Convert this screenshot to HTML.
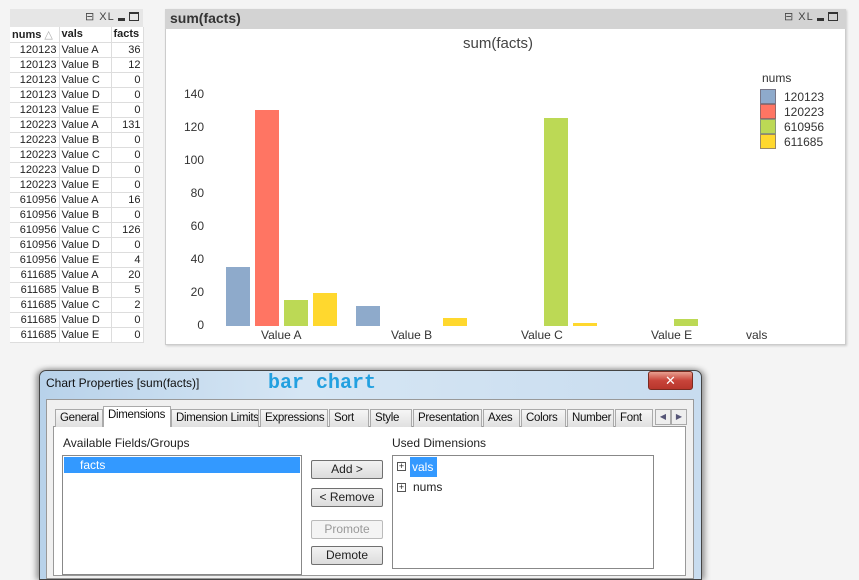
<!DOCTYPE html>
<html><head><meta charset="utf-8"><style>
*{margin:0;padding:0;box-sizing:border-box}
body{width:859px;height:572px;background:#f4f4f4;position:relative;overflow:hidden;font-family:"Liberation Sans","DejaVu Sans",sans-serif;font-size:11px;color:#222}
.a{position:absolute}
table{border-collapse:collapse;position:absolute;left:10px;top:27px;background:#fff}
td{height:15px;border-right:1px solid #ddd;border-bottom:1px solid #ddd;padding:0 2px;font-size:11px;line-height:14px;white-space:nowrap}
td.n{width:49px;text-align:right}
td.v{width:52px}
td.f{width:32px;text-align:right}
th{height:15px;font-weight:bold;text-align:left;padding:0 2px;border-right:1px solid #ddd;border-bottom:1px solid #ddd;font-size:11px}
.bar{position:absolute;width:24px}
.B{background:#8eaacb}.R{background:#ff7563}.G{background:#bcd955}.Y{background:#ffd82e}
.yl{position:absolute;width:40px;text-align:right;font-size:12px;color:#333}
.xl{position:absolute;font-size:12px;color:#333}
.tab{position:absolute;top:409px;height:18px;border:1px solid #aaa;border-bottom:none;background:linear-gradient(#f6f6f6,#e0e0e0);font-size:11.5px;padding:2px 0 0 4px;color:#111;white-space:nowrap;overflow:hidden;letter-spacing:-0.3px}
.btn{position:absolute;left:311px;width:72px;height:19px;border:1px solid #707070;border-radius:2px;background:linear-gradient(#f2f2f2,#dcdcdc);text-align:center;font-size:12px;line-height:17px}
</style></head><body>
<div class="a" style="left:10px;top:9px;width:133px;height:18px;background:#e6e6e6"></div>
<div class="a" style="left:85px;top:10px;font-size:11px;color:#444;letter-spacing:1px">⊟ XL <span style="display:inline-block;width:7px;height:3px;background:#333;vertical-align:-1px"></span> <span style="display:inline-block;width:10px;height:9px;border:1px solid #333;border-top-width:2px;vertical-align:-1px"></span></div>
<table>
<tr><th style="width:49px">nums <span style="color:#aaa;font-weight:normal">△</span></th><th style="width:52px">vals</th><th style="width:32px">facts</th></tr>
<tr><td class="n">120123</td><td class="v">Value A</td><td class="f">36</td></tr>
<tr><td class="n">120123</td><td class="v">Value B</td><td class="f">12</td></tr>
<tr><td class="n">120123</td><td class="v">Value C</td><td class="f">0</td></tr>
<tr><td class="n">120123</td><td class="v">Value D</td><td class="f">0</td></tr>
<tr><td class="n">120123</td><td class="v">Value E</td><td class="f">0</td></tr>
<tr><td class="n">120223</td><td class="v">Value A</td><td class="f">131</td></tr>
<tr><td class="n">120223</td><td class="v">Value B</td><td class="f">0</td></tr>
<tr><td class="n">120223</td><td class="v">Value C</td><td class="f">0</td></tr>
<tr><td class="n">120223</td><td class="v">Value D</td><td class="f">0</td></tr>
<tr><td class="n">120223</td><td class="v">Value E</td><td class="f">0</td></tr>
<tr><td class="n">610956</td><td class="v">Value A</td><td class="f">16</td></tr>
<tr><td class="n">610956</td><td class="v">Value B</td><td class="f">0</td></tr>
<tr><td class="n">610956</td><td class="v">Value C</td><td class="f">126</td></tr>
<tr><td class="n">610956</td><td class="v">Value D</td><td class="f">0</td></tr>
<tr><td class="n">610956</td><td class="v">Value E</td><td class="f">4</td></tr>
<tr><td class="n">611685</td><td class="v">Value A</td><td class="f">20</td></tr>
<tr><td class="n">611685</td><td class="v">Value B</td><td class="f">5</td></tr>
<tr><td class="n">611685</td><td class="v">Value C</td><td class="f">2</td></tr>
<tr><td class="n">611685</td><td class="v">Value D</td><td class="f">0</td></tr>
<tr><td class="n">611685</td><td class="v">Value E</td><td class="f">0</td></tr>
</table>

<div class="a" style="left:165px;top:9px;width:681px;height:336px;background:#fff;border:1px solid #ccc;box-shadow:1px 1px 2px #ccc"></div>
<div class="a" style="left:165px;top:9px;width:681px;height:20px;background:#d3d3d3"></div>
<div class="a" style="left:170px;top:10px;font-size:14px;font-weight:bold;color:#333">sum(facts)</div>
<div class="a" style="left:784px;top:10px;font-size:11px;color:#444;letter-spacing:1px">⊟ XL <span style="display:inline-block;width:7px;height:3px;background:#333;vertical-align:-1px"></span> <span style="display:inline-block;width:10px;height:9px;border:1px solid #333;border-top-width:2px;vertical-align:-1px"></span></div>
<div class="a" style="left:463px;top:35px;font-size:15px;color:#444">sum(facts)</div>
<div class="yl" style="left:164px;top:87px">140</div>
<div class="yl" style="left:164px;top:120px">120</div>
<div class="yl" style="left:164px;top:153px">100</div>
<div class="yl" style="left:164px;top:186px">80</div>
<div class="yl" style="left:164px;top:219px">60</div>
<div class="yl" style="left:164px;top:252px">40</div>
<div class="yl" style="left:164px;top:285px">20</div>
<div class="yl" style="left:164px;top:318px">0</div>
<div class="bar B" style="left:226px;top:267px;height:59px"></div>
<div class="bar R" style="left:255px;top:110px;height:216px"></div>
<div class="bar G" style="left:284px;top:300px;height:26px"></div>
<div class="bar Y" style="left:313px;top:293px;height:33px"></div>
<div class="bar B" style="left:356px;top:306px;height:20px"></div>
<div class="bar Y" style="left:443px;top:318px;height:8px"></div>
<div class="bar G" style="left:544px;top:118px;height:208px"></div>
<div class="bar Y" style="left:573px;top:323px;height:3px"></div>
<div class="bar G" style="left:674px;top:319px;height:7px"></div>
<div class="xl" style="left:261px;top:328px">Value A</div>
<div class="xl" style="left:391px;top:328px">Value B</div>
<div class="xl" style="left:521px;top:328px">Value C</div>
<div class="xl" style="left:651px;top:328px">Value E</div>
<div class="xl" style="left:746px;top:328px">vals</div>
<div class="xl" style="left:762px;top:71px">nums</div>
<div class="a B" style="left:760px;top:89px;width:16px;height:15px;border:1px solid #778"></div>
<div class="a R" style="left:760px;top:104px;width:16px;height:15px;border:1px solid #966"></div>
<div class="a G" style="left:760px;top:119px;width:16px;height:15px;border:1px solid #897"></div>
<div class="a Y" style="left:760px;top:134px;width:16px;height:15px;border:1px solid #986"></div>
<div class="xl" style="left:784px;top:90px;line-height:15px">120123<br>120223<br>610956<br>611685</div>

<div class="a" style="left:39px;top:370px;width:663px;height:210px;border:1px solid #444;border-radius:7px 7px 0 0;background:linear-gradient(90deg,#b8d2ea,#d6e6f4 40%,#c8dcef);box-shadow:-3px 0 6px #999,3px 0 6px #999"></div>
<div class="a" style="left:46px;top:376px;font-size:12px;color:#111">Chart Properties [sum(facts)]</div>
<div class="a" style="left:268px;top:372px;font-family:'Liberation Mono',monospace;font-size:20px;font-weight:bold;color:#22a0e0">bar chart</div>
<div class="a" style="left:648px;top:371px;width:45px;height:19px;border:1px solid #7a2a20;border-radius:3px;background:linear-gradient(#e8a090,#c8443a 50%,#b8362c);color:#fff;font-weight:bold;text-align:center;font-size:13px;line-height:17px">✕</div>
<div class="a" style="left:46px;top:399px;width:648px;height:180px;background:#f0f0f0;border:1px solid #999"></div>
<div class="a" style="left:53px;top:426px;width:633px;height:150px;background:#fff;border:1px solid #999"></div>
<div class="tab" style="left:55px;width:48px">General</div>
<div class="tab" style="left:103px;top:406px;height:21px;width:68px;background:#fff">Dimensions</div>
<div class="tab" style="left:171px;width:88px">Dimension Limits</div>
<div class="tab" style="left:260px;width:68px">Expressions</div>
<div class="tab" style="left:329px;width:40px">Sort</div>
<div class="tab" style="left:370px;width:42px">Style</div>
<div class="tab" style="left:413px;width:69px">Presentation</div>
<div class="tab" style="left:483px;width:37px">Axes</div>
<div class="tab" style="left:521px;width:45px">Colors</div>
<div class="tab" style="left:567px;width:47px">Number</div>
<div class="tab" style="left:615px;width:38px">Font</div>
<div class="a" style="left:655px;top:409px;width:16px;height:16px;border:1px solid #aaa;background:#eee;font-size:8px;color:#557;text-align:center;line-height:14px">◀</div>
<div class="a" style="left:671px;top:409px;width:16px;height:16px;border:1px solid #aaa;background:#eee;font-size:8px;color:#557;text-align:center;line-height:14px">▶</div>
<div class="a" style="left:63px;top:436px;font-size:12px">Available Fields/Groups</div>
<div class="a" style="left:392px;top:436px;font-size:12px">Used Dimensions</div>
<div class="a" style="left:62px;top:455px;width:240px;height:120px;border:1px solid #888;background:#fff"></div>
<div class="a" style="left:64px;top:457px;width:236px;height:16px;background:#3399ff;color:#fff;font-size:12px;padding-left:16px;line-height:16px">facts</div>
<div class="a" style="left:392px;top:455px;width:262px;height:114px;border:1px solid #888;background:#fff"></div>
<div class="a" style="left:397px;top:462px;width:9px;height:9px;border:1px solid #555;font-size:9px;line-height:7px;text-align:center">+</div>
<div class="a" style="left:410px;top:457px;width:27px;height:20px;background:#3399ff;color:#fff;font-size:12px;padding-left:2px;line-height:20px">vals</div>
<div class="a" style="left:397px;top:483px;width:9px;height:9px;border:1px solid #555;font-size:9px;line-height:7px;text-align:center">+</div>
<div class="a" style="left:413px;top:480px;font-size:12px">nums</div>
<div class="btn" style="top:460px">Add &gt;</div>
<div class="btn" style="top:488px">&lt; Remove</div>
<div class="btn" style="top:520px;color:#999;border-color:#bbb;background:#f4f4f4">Promote</div>
<div class="btn" style="top:546px">Demote</div>
</body></html>
